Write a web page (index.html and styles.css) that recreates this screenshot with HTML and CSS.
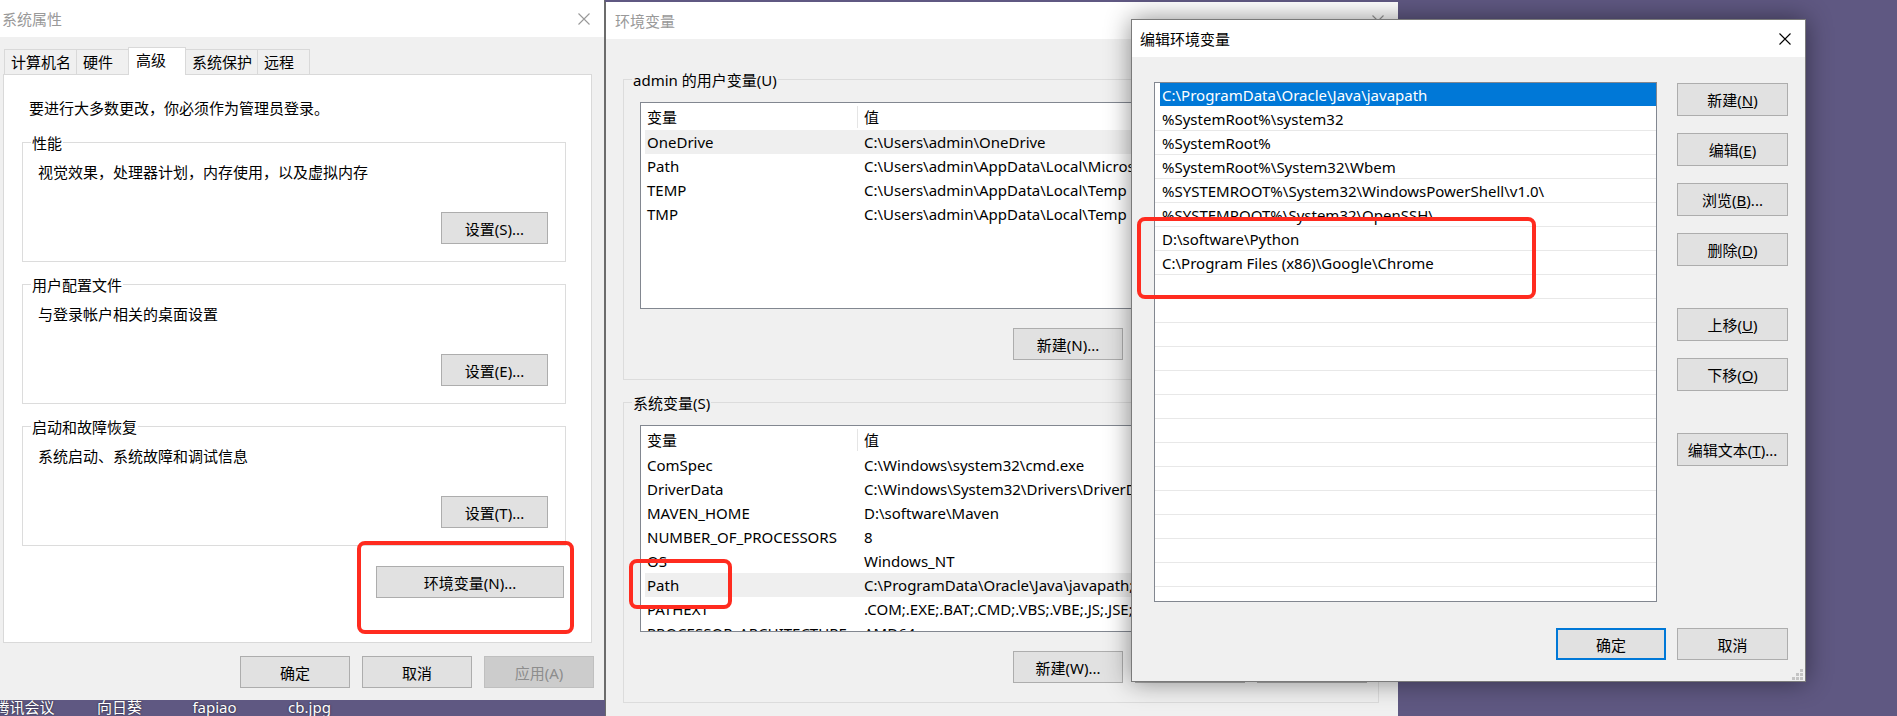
FILE: index.html
```html
<!DOCTYPE html>
<html lang="zh-CN">
<head>
  <meta charset="UTF-8">
  <title>环境变量</title>
  <link rel="stylesheet" href="styles.css">
</head>
<body>
<div class="desktop">

  <!-- 桌面图标文字 -->
  <div class="desk-icons">
    <span>腾讯会议</span>
    <span>向日葵</span>
    <span>fapiao</span>
    <span>cb.jpg</span>
  </div>

  <!-- 系统属性 -->
  <div class="win win-sys">
    <div class="titlebar inactive">
      <span>系统属性</span>
      <svg class="close" width="12" height="12" viewBox="0 0 12 12"><path d="M0.5 0.5L11.5 11.5M11.5 0.5L0.5 11.5" stroke="currentColor" stroke-width="1.1"/></svg>
    </div>
    <div class="tabs">
      <div class="tab">计算机名</div>
      <div class="tab">硬件</div>
      <div class="tab active">高级</div>
      <div class="tab">系统保护</div>
      <div class="tab">远程</div>
    </div>
    <div class="tab-panel">
      <p class="note">要进行大多数更改，你必须作为管理员登录。</p>
      <div class="group">
        <span class="legend">性能</span>
        <p class="desc">视觉效果，处理器计划，内存使用，以及虚拟内存</p>
        <button class="btn btn-set">设置(S)...</button>
      </div>
      <div class="group">
        <span class="legend">用户配置文件</span>
        <p class="desc">与登录帐户相关的桌面设置</p>
        <button class="btn btn-set">设置(E)...</button>
      </div>
      <div class="group">
        <span class="legend">启动和故障恢复</span>
        <p class="desc">系统启动、系统故障和调试信息</p>
        <button class="btn btn-set">设置(T)...</button>
      </div>
      <button class="btn btn-env">环境变量(N)...</button>
    </div>
    <div class="win-footer">
      <button class="btn">确定</button>
      <button class="btn">取消</button>
      <button class="btn" disabled>应用(A)</button>
    </div>
  </div>

  <!-- 环境变量 -->
  <div class="win win-env">
    <div class="titlebar inactive">
      <span>环境变量</span>
      <svg class="close" width="12" height="12" viewBox="0 0 12 12"><path d="M0.5 0.5L11.5 11.5M11.5 0.5L0.5 11.5" stroke="currentColor" stroke-width="1.1"/></svg>
    </div>
    <div class="env-body">
      <div class="vgroup">
        <span class="legend">admin 的用户变量(U)</span>
        <div class="listview">
          <div class="lv-head"><span class="lv-name">变量</span><span class="lv-val">值</span></div>
          <div class="lv-row sel"><span class="lv-name">OneDrive</span><span class="lv-val">C:\Users\admin\OneDrive</span></div>
          <div class="lv-row"><span class="lv-name">Path</span><span class="lv-val">C:\Users\admin\AppData\Local\Microsoft\WindowsApps;</span></div>
          <div class="lv-row"><span class="lv-name">TEMP</span><span class="lv-val">C:\Users\admin\AppData\Local\Temp</span></div>
          <div class="lv-row"><span class="lv-name">TMP</span><span class="lv-val">C:\Users\admin\AppData\Local\Temp</span></div>
        </div>
        <div class="vbuttons">
          <button class="btn">新建(N)...</button>
          <button class="btn">编辑(E)...</button>
          <button class="btn">删除(D)</button>
        </div>
      </div>
      <div class="vgroup">
        <span class="legend">系统变量(S)</span>
        <div class="listview">
          <div class="lv-head"><span class="lv-name">变量</span><span class="lv-val">值</span></div>
          <div class="lv-row"><span class="lv-name">ComSpec</span><span class="lv-val">C:\Windows\system32\cmd.exe</span></div>
          <div class="lv-row"><span class="lv-name">DriverData</span><span class="lv-val">C:\Windows\System32\Drivers\DriverData</span></div>
          <div class="lv-row"><span class="lv-name">MAVEN_HOME</span><span class="lv-val">D:\software\Maven</span></div>
          <div class="lv-row"><span class="lv-name">NUMBER_OF_PROCESSORS</span><span class="lv-val">8</span></div>
          <div class="lv-row"><span class="lv-name">OS</span><span class="lv-val">Windows_NT</span></div>
          <div class="lv-row sel"><span class="lv-name">Path</span><span class="lv-val">C:\ProgramData\Oracle\Java\javapath;%SystemRoot%\system32;</span></div>
          <div class="lv-row"><span class="lv-name">PATHEXT</span><span class="lv-val">.COM;.EXE;.BAT;.CMD;.VBS;.VBE;.JS;.JSE;.WSF;.WSH;.MSC</span></div>
          <div class="lv-row"><span class="lv-name">PROCESSOR_ARCHITECTURE</span><span class="lv-val">AMD64</span></div>
        </div>
        <div class="vbuttons">
          <button class="btn">新建(W)...</button>
          <button class="btn">编辑(I)...</button>
          <button class="btn">删除(L)</button>
        </div>
      </div>
    </div>
  </div>

  <!-- 编辑环境变量 -->
  <div class="win win-edit">
    <div class="titlebar">
      <span>编辑环境变量</span>
      <svg class="close" width="12" height="12" viewBox="0 0 12 12"><path d="M0.5 0.5L11.5 11.5M11.5 0.5L0.5 11.5" stroke="currentColor" stroke-width="1.1"/></svg>
    </div>
    <div class="edit-body">
      <div class="path-list">
        <div class="path-row sel">C:\ProgramData\Oracle\Java\javapath</div>
        <div class="path-row">%SystemRoot%\system32</div>
        <div class="path-row">%SystemRoot%</div>
        <div class="path-row">%SystemRoot%\System32\Wbem</div>
        <div class="path-row">%SYSTEMROOT%\System32\WindowsPowerShell\v1.0\</div>
        <div class="path-row">%SYSTEMROOT%\System32\OpenSSH\</div>
        <div class="path-row">D:\software\Python</div>
        <div class="path-row">C:\Program Files (x86)\Google\Chrome</div>
        <div class="path-row"></div>
        <div class="path-row"></div>
        <div class="path-row"></div>
        <div class="path-row"></div>
        <div class="path-row"></div>
        <div class="path-row"></div>
        <div class="path-row"></div>
        <div class="path-row"></div>
        <div class="path-row"></div>
        <div class="path-row"></div>
        <div class="path-row"></div>
        <div class="path-row"></div>
        <div class="path-row"></div>
        <div class="path-row"></div>
      </div>
      <div class="side-buttons">
        <button class="btn">新建(<u>N</u>)</button>
        <button class="btn">编辑(<u>E</u>)</button>
        <button class="btn">浏览(<u>B</u>)...</button>
        <button class="btn">删除(<u>D</u>)</button>
        <button class="btn gap">上移(<u>U</u>)</button>
        <button class="btn">下移(<u>O</u>)</button>
        <button class="btn gap">编辑文本(<u>T</u>)...</button>
      </div>
    </div>
    <div class="edit-footer">
      <button class="btn default">确定</button>
      <button class="btn">取消</button>
    </div>
    <div class="grip">
      <i></i><i></i><i></i><i></i><i></i><i></i>
    </div>
  </div>

  <!-- 红框标注 -->
  <div class="mark mark-env"></div>
  <div class="mark mark-path"></div>
  <div class="mark mark-new"></div>

</div>
</body>
</html>
```

FILE: styles.css
```css
* {
  box-sizing: border-box;
}
body {
  margin: 0;
  width: 1897px;
  height: 716px;
  overflow: hidden;
  background: #5f5882;
  font-family: "Noto Sans", "Noto Sans CJK SC", sans-serif;
  font-size: 15px;
  color: #000;
}
p {
  margin: 0;
}
.desktop {
  position: relative;
  width: 1897px;
  height: 716px;
  overflow: hidden;
}

/* desktop labels */
.desk-icons {
  position: absolute;
  left: -23px;
  top: 697px;
  display: flex;
}
.desk-icons span {
  width: 95px;
  text-align: center;
  color: #fff;
  line-height: 20px;
  text-shadow: 0 0 2px rgba(0,0,0,0.7);
}

/* windows */
.win {
  position: absolute;
  background: #f0f0f0;
}
.titlebar {
  height: 37px;
  background: #fff;
  display: flex;
  align-items: center;
  justify-content: space-between;
  color: #000;
}
.titlebar.inactive {
  color: #999;
}
.close {
  display: block;
}

.btn {
  height: 32px;
  width: 110px;
  padding: 0;
  background: #e1e1e1;
  border: 1px solid #adadad;
  font: inherit;
  color: #000;
}
.btn:disabled {
  background: #cccccc;
  border-color: #bfbfbf;
  color: #8d8d8d;
}

/* 系统属性 */
.win-sys {
  left: 0;
  top: 0;
  width: 605px;
  height: 700px;
  border-right: 1px solid #6c6c6c;
}
.win-sys .titlebar {
  padding: 0 14px 0 2px;
}
.tabs {
  display: flex;
  align-items: flex-end;
  height: 26px;
  margin-top: 11px;
  padding-left: 4px;
}
.tab {
  height: 25px;
  min-width: 53px;
  padding: 0 5px 0 6px;
  line-height: 24px;
  border: 1px solid #d9d9d9;
  border-bottom: none;
  margin-right: -1px;
  background: #f0f0f0;
}
.tab.active {
  position: relative;
  z-index: 2;
  height: 28px;
  min-width: 58px;
  padding-left: 7px;
  margin-bottom: -1px;
  line-height: 25px;
  background: #fff;
}
.tab-panel {
  margin-left: 3px;
  width: 589px;
  height: 569px;
  background: #fff;
  border: 1px solid #d9d9d9;
  padding: 23px 25px 0 18px;
}
.note {
  margin-left: 7px;
  line-height: 20px;
}
.group {
  height: 120px;
  margin-top: 24px;
  border: 1px solid #dcdcdc;
  padding: 0 17px 17px 15px;
  display: flex;
  flex-direction: column;
  align-items: flex-start;
}
.group + .group {
  margin-top: 22px;
}
.legend {
  margin: -10px 0 0 -7px;
  padding: 0 1px;
  line-height: 20px;
  background: #fff;
}
.desc {
  margin-top: 9px;
  line-height: 20px;
}
.btn-set {
  margin-top: auto;
  align-self: flex-end;
  width: 107px;
}
.btn-env {
  display: block;
  width: 188px;
  margin: 20px 2px 0 auto;
}
.win-footer {
  display: flex;
  justify-content: flex-end;
  gap: 12px;
  padding: 13px 10px 0 0;
}

/* 环境变量 */
.win-env {
  left: 605px;
  top: 2px;
  width: 793px;
  height: 730px;
  border-left: 1px solid #6c6c6c;
}
.win-env .titlebar {
  padding: 0 14px 0 9px;
}
.env-body {
  padding: 40px 0 0 17px;
}
.vgroup {
  width: 756px;
  height: 301px;
  border: 1px solid #dcdcdc;
  padding: 0 11px 0 16px;
  display: flex;
  flex-direction: column;
  align-items: flex-start;
}
.vgroup + .vgroup {
  margin-top: 22px;
}
.vgroup .legend {
  margin-left: -8px;
  background: #f0f0f0;
}
.listview {
  width: 722px;
  height: 207px;
  margin-top: 12px;
  background: #fff;
  border: 1px solid #828790;
  overflow: hidden;
}
.lv-head {
  display: flex;
  align-items: center;
  height: 27px;
}
.lv-head .lv-name {
  width: 217px;
  padding-left: 6px;
  border-right: 1px solid #e5e5e5;
  line-height: 22px;
}
.lv-row {
  display: flex;
  align-items: center;
  height: 24px;
  margin-left: 4px;
  white-space: nowrap;
}
.lv-row.sel {
  background: #efefef;
}
.lv-row .lv-name {
  width: 213px;
  padding-left: 2px;
  flex: none;
}
.lv-val {
  padding-left: 6px;
  white-space: nowrap;
}
.vbuttons {
  display: flex;
  gap: 12px;
  align-self: flex-end;
  margin-top: 19px;
}

/* 编辑环境变量 */
.win-edit {
  left: 1131px;
  top: 19px;
  width: 675px;
  height: 663px;
  border: 1px solid #7a7a7a;
  box-shadow: 0 0 24px rgba(0,0,0,0.45);
}
.win-edit .titlebar {
  padding: 0 14px 0 8px;
}
.edit-body {
  display: flex;
  gap: 20px;
  padding: 25px 0 0 22px;
}
.path-list {
  width: 503px;
  height: 520px;
  background: #fff;
  border: 1px solid #828790;
  overflow: hidden;
}
.path-row {
  height: 24px;
  line-height: 21px;
  padding: 2px 0 0 7px;
  border-bottom: 1px solid #e8e8e8;
  white-space: nowrap;
}
.path-row.sel {
  background: linear-gradient(to right, #fff 5px, #0078d7 5px);
  color: #fff;
  border-bottom-color: #fff;
}
.side-buttons {
  display: flex;
  flex-direction: column;
  gap: 17px;
  padding-top: 1px;
}
.side-buttons .btn {
  width: 111px;
  height: 33px;
}
.side-buttons .gap {
  margin-top: 25px;
}
.edit-footer {
  display: flex;
  justify-content: flex-end;
  gap: 11px;
  padding: 26px 17px 0 0;
}
.edit-footer .btn {
  width: 110px;
}
.edit-footer .btn:last-child {
  width: 111px;
}
.btn.default {
  border: 2px solid #0078d7;
}
.grip {
  position: absolute;
  right: 2px;
  bottom: 1px;
  width: 12px;
  height: 12px;
}
.grip i {
  position: absolute;
  width: 3px;
  height: 3px;
  background: #c4c4c4;
}
.grip i:nth-child(1) { right: 0; bottom: 0; }
.grip i:nth-child(2) { right: 4px; bottom: 0; }
.grip i:nth-child(3) { right: 8px; bottom: 0; }
.grip i:nth-child(4) { right: 0; bottom: 4px; }
.grip i:nth-child(5) { right: 4px; bottom: 4px; }
.grip i:nth-child(6) { right: 0; bottom: 8px; }

/* red annotations */
.mark {
  position: absolute;
  border: 4px solid #ff2b1f;
  border-radius: 8px;
}
.mark-env {
  left: 357px;
  top: 541px;
  width: 217px;
  height: 93px;
}
.mark-path {
  left: 629px;
  top: 559px;
  width: 103px;
  height: 50px;
}
.mark-new {
  left: 1137px;
  top: 217px;
  width: 399px;
  height: 82px;
}
```
